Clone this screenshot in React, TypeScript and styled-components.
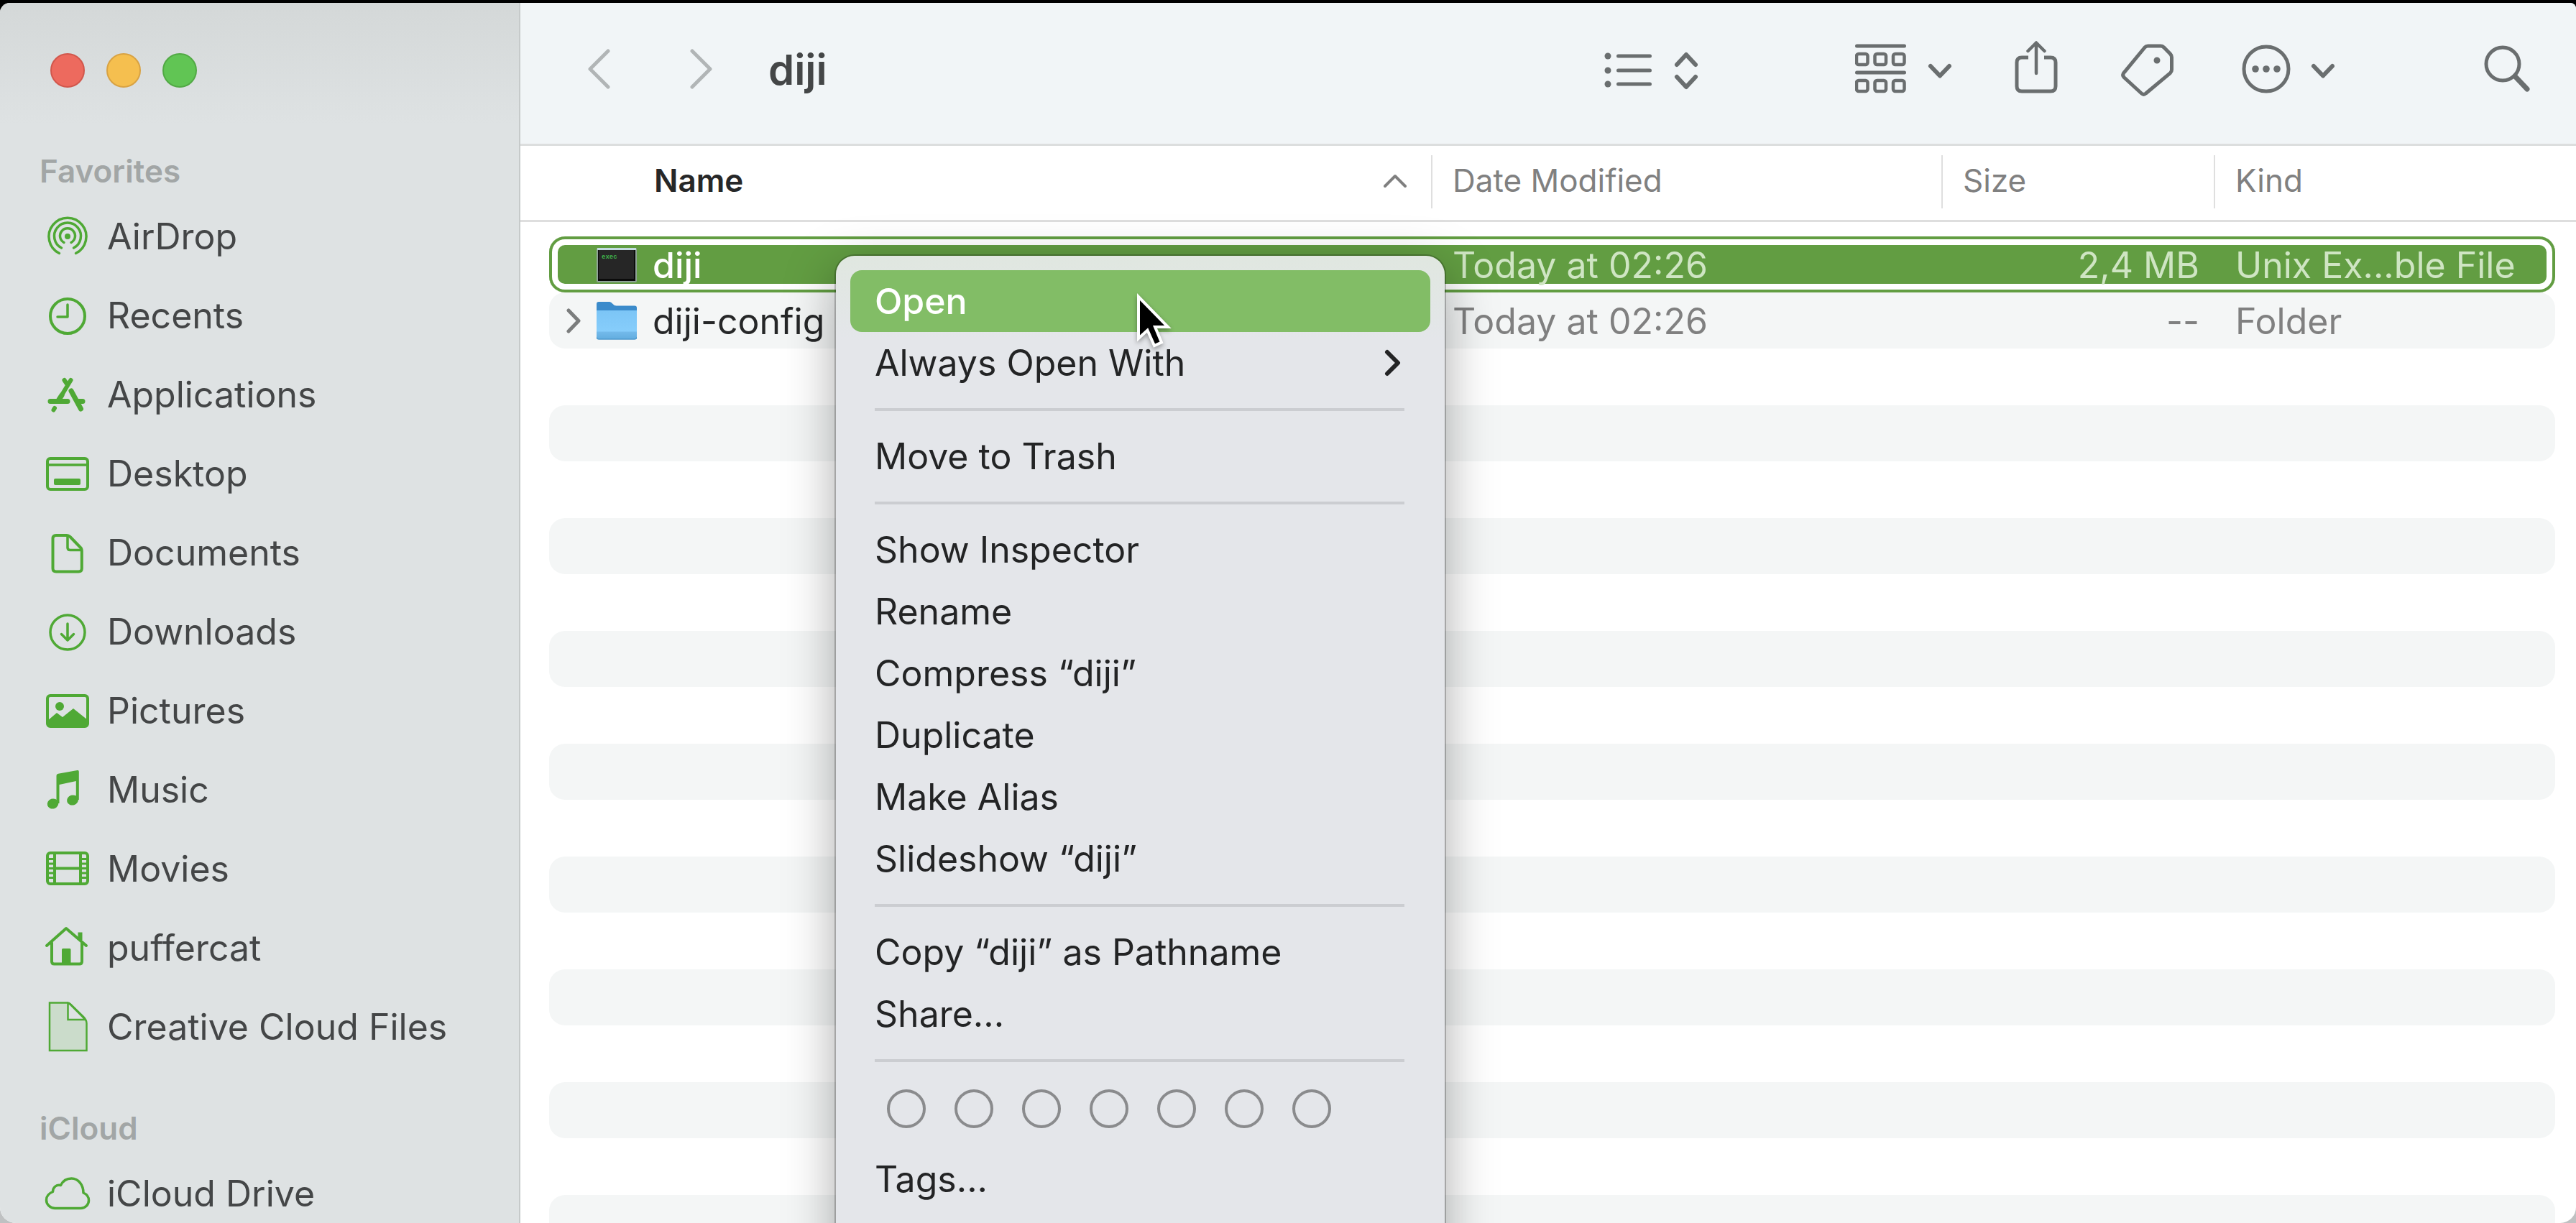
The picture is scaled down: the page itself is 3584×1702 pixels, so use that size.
import React from "react";
import styled, { createGlobalStyle } from "styled-components";

const green = "#4fa935";
const rowGreen = "#629d42";
const glyph = "#6a6e6f";
const listColumns = "minmax(0, 1fr) 710px 379px";

const GlobalStyle = createGlobalStyle`
  *, *::before, *::after { box-sizing: border-box; }
  body {
    margin: 0;
    overflow: hidden;
    background: linear-gradient(#000 50%, #bfc1c2 50%);
    font-family: Inter, "Liberation Sans", sans-serif;
    font-size: 50px;
    line-height: 60px;
    color: #262728;
  }
  button { font: inherit; color: inherit; background: none; border: 0; padding: 0; margin: 0; }
  svg { display: block; flex: none; }
`;

const Screen = styled.div`
  height: 100vh;
  padding-top: 4px;
  overflow: hidden;
`;

const FinderWindow = styled.div`
  position: relative;
  display: flex;
  height: 100%;
  border-radius: 14px 8px 22px 22px;
  overflow: hidden;
  background: #fff;
`;

/* ---------- sidebar ---------- */

const Sidebar = styled.aside`
  flex: none;
  width: 724px;
  padding: 70px 0 0 57px;
  border-right: 2px solid #c6caca;
  background: linear-gradient(#d4d8d8, #dee2e3 170px);
  overflow: hidden;
`;

const TrafficLights = styled.div`
  display: flex;
  gap: 30px;
  padding-left: 13px;
`;

const Light = styled.button<{ $fill: string; $edge: string }>`
  width: 48px;
  height: 48px;
  border-radius: 50%;
  background: ${(p) => p.$fill};
  border: 2px solid ${(p) => p.$edge};
`;

const SectionTitle = styled.h2<{ $gap: number }>`
  margin: ${(p) => p.$gap}px 0 10px -2px;
  font-size: 44px;
  line-height: 52px;
  font-weight: 600;
  color: #a2a6a6;
`;

const PlaceList = styled.ul`
  list-style: none;
  margin: 0;
  padding: 0;
`;

const Place = styled.a`
  display: flex;
  align-items: center;
  gap: 23px;
  height: 110px;
  padding-left: 5px;
  color: #444647;
  text-decoration: none;
  white-space: nowrap;
`;

/* ---------- toolbar ---------- */

const Main = styled.main`
  flex: 1;
  min-width: 0;
  display: flex;
  flex-direction: column;
`;

const Toolbar = styled.header`
  display: flex;
  flex: none;
  align-items: center;
  justify-content: space-between;
  height: 199px;
  padding: 0 64px 10px 93px;
  background: #f1f5f7;
  border-bottom: 3px solid #dcdede;
`;

const ToolGroup = styled.div<{ $gap: number }>`
  display: flex;
  align-items: center;
  gap: ${(p) => p.$gap}px;
`;

const Title = styled.h1`
  margin: 0;
  font-size: 58px;
  line-height: 70px;
  font-weight: 600;
  color: #444647;
`;

/* ---------- file list ---------- */

const FileTable = styled.table`
  display: block;
  flex: none;
`;

const HeadSection = styled.thead`
  display: block;
  padding: 13px 0 16px;
  border-bottom: 3px solid #dedede;
`;

const HeadRow = styled.tr`
  display: grid;
  grid-template-columns: ${listColumns} 504px;
`;

const HeadCell = styled.th<{ $active?: boolean }>`
  display: flex;
  align-items: center;
  justify-content: space-between;
  height: 74px;
  padding: 0 34px 4px ${(p) => (p.$active ? 186 : 28)}px;
  border-left: ${(p) => (p.$active ? 0 : 2)}px solid #dfdfdf;
  font-size: 44px;
  font-weight: ${(p) => (p.$active ? 600 : 400)};
  color: ${(p) => (p.$active ? "#262728" : "#808080")};
`;

const Body = styled.tbody`
  display: block;
  padding: 20px 29px 0 40px;
`;

const FileRow = styled.tr<{ $selected?: boolean; $striped?: boolean }>`
  display: grid;
  grid-template-columns: ${listColumns} 475px;
  height: ${(p) => (p.$selected || p.$striped ? 78 : 79)}px;
  border-radius: 22px;
  background: ${(p) => (p.$selected ? rowGreen : p.$striped ? "#f4f6f6" : "transparent")};
  box-shadow: ${(p) => (p.$selected ? `inset 0 0 0 4px ${rowGreen}, inset 0 0 0 12px #fff` : "none")};
  color: ${(p) => (p.$selected ? "#cfe5c3" : "#808080")};
`;

const NameCell = styled.td<{ $selected?: boolean }>`
  display: grid;
  grid-template-columns: 22px 56px auto;
  justify-content: start;
  align-items: center;
  column-gap: 22px;
  padding: 2px 0 0 22px;
  color: ${(p) => (p.$selected ? "#fff" : "#262728")};
  font-weight: ${(p) => (p.$selected ? 500 : 400)};
`;

const Cell = styled.td<{ $end?: boolean }>`
  display: flex;
  align-items: center;
  justify-content: ${(p) => (p.$end ? "flex-end" : "flex-start")};
  padding: 2px ${(p) => (p.$end ? 20 : 0)}px 0 30px;
  white-space: nowrap;
`;

/* ---------- context menu ---------- */

const Menu = styled.div`
  position: absolute;
  top: 352px;
  left: 1163px;
  width: 847px;
  min-height: 100%;
  padding: 20px;
  border-radius: 26px;
  background: linear-gradient(#e0e7e0, #e4e6ea 120px);
  box-shadow: 0 0 0 2px rgba(0, 0, 0, 0.22), 0 20px 70px rgba(0, 0, 0, 0.34);
`;

const MenuItem = styled.button<{ $active?: boolean }>`
  display: flex;
  align-items: center;
  justify-content: space-between;
  width: 100%;
  height: 86px;
  padding: 0 40px 0 34px;
  border-radius: 16px;
  text-align: left;
  color: ${(p) => (p.$active ? "#fff" : "#232425")};
  background: ${(p) => (p.$active ? "#82bd66" : "transparent")};
  font-weight: ${(p) => (p.$active ? 500 : 400)};
`;

const Separator = styled.hr`
  height: 4px;
  margin: 20px 36px 20px 34px;
  border: 0;
  background: #cbcdd1;
`;

const TagRow = styled.div`
  display: flex;
  gap: 40px;
  padding: 18px 0 28px 51px;
`;

const TagDot = styled.button`
  width: 54px;
  height: 54px;
  border: 4px solid #8a8b8d;
  border-radius: 50%;
`;

const Pointer = styled.svg`
  position: absolute;
  top: 50px;
  left: 416px;
  filter: drop-shadow(0 3px 3px rgba(0, 0, 0, 0.35));
`;

/* ---------- drawings ---------- */

type Drawing = { children: React.ReactNode };

const SideIcon = ({ children }: Drawing) => (
  <svg width="64" height="72" viewBox="0 0 64 72" fill="none" stroke={green} strokeWidth="4" strokeLinecap="round" strokeLinejoin="round" aria-hidden="true">
    {children}
  </svg>
);

const ToolIcon = ({ width, children }: Drawing & { width: number }) => (
  <svg width={width} height="80" viewBox={`0 0 ${width} 80`} fill="none" stroke={glyph} strokeWidth="5" strokeLinecap="round" strokeLinejoin="round" aria-hidden="true">
    {children}
  </svg>
);

const icons: Record<string, React.ReactNode> = {
  airdrop: (
    <g strokeWidth="3.500">
      <circle cx="32" cy="36" r="4" fill={green} stroke="none" />
      <path d="M27 44.500A10.500 10.500 0 1 1 37 44.500" />
      <path d="M23.500 52A18.500 18.500 0 1 1 40.500 52" />
      <path d="M20.500 59.500A26 26 0 1 1 43.500 59.500" />
    </g>
  ),
  recents: (
    <>
      <circle cx="32" cy="37" r="24" />
      <path d="M32 21v17H18" strokeWidth="3.500" />
    </>
  ),
  applications: (
    <g strokeWidth="7">
      <path d="M36.500 16L22 40M27.500 16l4 6" strokeWidth="6" />
      <path d="M8 45.500h24M48 45.500h5" />
      <path d="M37 31l13.500 25" />
      <path d="M14 55l-1.500 2.500" strokeWidth="6" />
      <path d="M20 43l4-6" />
    </g>
  ),
  desktop: (
    <>
      <rect x="4" y="15" width="56" height="43" rx="4" />
      <path d="M4 24h56" strokeWidth="3.500" />
      <rect x="13" y="43" width="37" height="9" rx="2" fill={green} stroke="none" />
    </>
  ),
  documents: (
    <g>
      <path d="M16 12h15c2 0 3 0.600 4.500 2L50 29c1.200 1.200 1.800 2.500 1.800 4.500V58c0 3-1.500 4.500-4.500 4.500H16c-3 0-4.500-1.500-4.500-4.500V16.500c0-3 1.500-4.500 4.500-4.500z" />
      <path d="M32 13v16c0 2.500 1 3.500 3.500 3.500H51" strokeWidth="3.500" />
    </g>
  ),
  downloads: (
    <g strokeWidth="3.500">
      <circle cx="32" cy="37" r="24" />
      <path d="M32 25v23M23.500 39.500L32 48l8.500-8.500" />
    </g>
  ),
  pictures: (
    <>
      <rect x="4" y="15" width="56" height="43" rx="4" />
      <circle cx="21" cy="30" r="6" fill={green} stroke="none" />
      <path d="M4 50l13-11 8 6 15-12 20 16v7c0 1.500-.5 2-2 2H6c-1.500 0-2-.5-2-2z" fill={green} stroke="none" />
    </>
  ),
  music: (
    <g fill={green} stroke="none">
      <ellipse cx="11.500" cy="55.500" rx="7.800" ry="7" transform="rotate(-18 11.500 55.500)" />
      <ellipse cx="39" cy="50.500" rx="8" ry="7" transform="rotate(-18 39 50.500)" />
      <path d="M16.500 17c0-2 .8-2.800 2.500-3.200L45.500 9c1.500-.2 2.300.4 2.300 2v39h-4V24L20.500 29v26h-4z" />
    </g>
  ),
  movies: (
    <g strokeWidth="3">
      <rect x="4" y="14" width="56" height="43" rx="4" strokeWidth="4" />
      <path d="M14 14v43M50 14v43" strokeWidth="4" />
      <path d="M14 35.500h36" strokeWidth="4" />
      <path d="M5 22.500h8M5 29h8M5 35.500h8M5 42h8M5 48.500h8M51 22.500h8M51 29h8M51 35.500h8M51 42h8M51 48.500h8" />
    </g>
  ),
  home: (
    <>
      <path d="M3 33L30 9l28 24" />
      <path d="M10 29v26c0 2.500 1 3.500 3.500 3.500h35c2.500 0 3.500-1 3.500-3.500V29" />
      <path d="M49.500 25V14.500" strokeWidth="6" strokeLinecap="butt" />
      <path d="M24 39c0-1.500.8-2 2-2h8.500c1.200 0 2 .5 2 2v19H24z" fill={green} stroke="none" />
    </>
  ),
  creative: (
    <g strokeWidth="2.500" strokeLinejoin="miter">
      <path d="M7 2.500h25c2 0 3 1 4 2L54 22c3.500 3.500 4.500 6 4.500 9v38H7z" fill="#cbdccb" />
      <path d="M32.500 3v23H56c-1-2-2-3-3.500-4.500L36 5c-1-1-2-1.500-3.500-2z" fill="#dee2e3" />
    </g>
  ),
  cloud: (
    <path d="M14.500 56.500h36c6 0 11-4.800 11-11 0-4.800-2.800-8.500-7.500-10.500C54 24 47 15 37.500 15c-7 0-12 3.200-15 9.500-5.500-1.500-11 2.500-11 9-5 2-9 6-9 11.500 0 6.200 5.200 11.500 12 11.500z" strokeWidth="3.500" />
  ),
};

const TerminalIcon = () => (
  <svg width="56" height="50" viewBox="0 0 56 50" aria-hidden="true">
    <rect x="0" y="1" width="56" height="48" rx="2" fill="#8fa397" />
    <rect x="1" y="1" width="54" height="3" fill="#c3dbe0" />
    <rect x="2" y="4" width="52" height="43" fill="#0b0b0b" />
    <rect x="3" y="4" width="49" height="40" fill="#262626" />
    <text x="7" y="16" fill="#3fae4a" fontFamily="Liberation Mono, monospace" fontWeight="700" fontSize="9">exec</text>
  </svg>
);

const FolderIcon = () => (
  <svg width="56" height="54" viewBox="0 0 56 54" aria-hidden="true">
    <defs>
      <linearGradient id="folder-front" x1="0" y1="0" x2="0" y2="1">
        <stop offset="0" stopColor="#7cc5f6" />
        <stop offset="0.720" stopColor="#86cdfb" />
        <stop offset="0.760" stopColor="#72b9ea" />
        <stop offset="1" stopColor="#62addf" />
      </linearGradient>
    </defs>
    <path d="M0 3c0-2 1-3 3-3h14c2 0 3 .5 4.500 2L24 4.200c1 .8 2 1.200 3.500 1.200H53c2 0 3 1 3 3V20H0z" fill="#3b8bcb" />
    <path d="M0 12h56v37c0 2-1 3-3 3H3c-2 0-3-1-3-3z" fill="url(#folder-front)" />
    <path d="M0 49c0 2 1 3 3 3h50c2 0 3-1 3-3" fill="none" stroke="#4f9ace" strokeWidth="1.500" />
  </svg>
);

/* ---------- data ---------- */

const favorites = [
  ["airdrop", "AirDrop"],
  ["recents", "Recents"],
  ["applications", "Applications"],
  ["desktop", "Desktop"],
  ["documents", "Documents"],
  ["downloads", "Downloads"],
  ["pictures", "Pictures"],
  ["music", "Music"],
  ["movies", "Movies"],
  ["home", "puffercat"],
  ["creative", "Creative Cloud Files"],
];

const menuGroups = [
  ["Open", "Always Open With"],
  ["Move to Trash"],
  ["Show Inspector", "Rename", "Compress “diji”", "Duplicate", "Make Alias", "Slideshow “diji”"],
  ["Copy “diji” as Pathname", "Share..."],
];

const tagNames = ["Red", "Orange", "Yellow", "Green", "Blue", "Purple", "Gray"];
const emptyRows = Array.from({ length: 16 }, (_, i) => i);

const Places = ({ items }: { items: string[][] }) => (
  <PlaceList>
    {items.map(([icon, label]) => (
      <li key={label}>
        <Place href="#">
          <SideIcon>{icons[icon]}</SideIcon>
          {label}
        </Place>
      </li>
    ))}
  </PlaceList>
);

export default function App() {
  return (
    <Screen>
      <GlobalStyle />
      <FinderWindow>
        <Sidebar>
          <TrafficLights>
            <Light $fill="#ed6a5e" $edge="#d1574c" aria-label="Close" />
            <Light $fill="#f5bf4f" $edge="#d8a243" aria-label="Minimize" />
            <Light $fill="#61c554" $edge="#52a945" aria-label="Zoom" />
          </TrafficLights>
          <SectionTitle $gap={90}>Favorites</SectionTitle>
          <Places items={favorites} />
          <SectionTitle $gap={60}>iCloud</SectionTitle>
          <Places items={[["cloud", "iCloud Drive"]]} />
        </Sidebar>

        <Main>
          <Toolbar>
            <ToolGroup $gap={78}>
              <ToolGroup $gap={110}>
                <button aria-label="Back">
                  <ToolIcon width={32}><path d="M29 14L4 39l25 25" stroke="#b1b5b6" /></ToolIcon>
                </button>
                <button aria-label="Forward">
                  <ToolIcon width={32}><path d="M4 14l25 25L4 64" stroke="#b1b5b6" /></ToolIcon>
                </button>
              </ToolGroup>
              <Title>diji</Title>
            </ToolGroup>
            <ToolGroup $gap={208}>
              <button aria-label="View as list">
                <ToolIcon width={141}>
                  <g fill={glyph} stroke="none">
                    <circle cx="5" cy="21" r="4.500" />
                    <circle cx="5" cy="41" r="4.500" />
                    <circle cx="5" cy="60" r="4.500" />
                  </g>
                  <path d="M19.500 21h44M19.500 41h44M19.500 60h44" />
                  <path d="M101 33l13-14 13 14M101 50l13 14 13-14" strokeWidth="6" />
                </ToolIcon>
              </button>
              <ToolGroup $gap={88}>
                <button aria-label="Group items">
                  <ToolIcon width={134}>
                    <path d="M2.500 7h66M2.500 44h66" />
                    {[18, 55].map((y) =>
                      [2, 27.5, 53].map((x) => <rect key={`${x}-${y}`} x={x} y={y} width="15.500" height="15" rx="3" strokeWidth="4.500" />)
                    )}
                    <path d="M105 35l13 13.500L131 35" strokeWidth="6" />
                  </ToolIcon>
                </button>
                <button aria-label="Share">
                  <ToolIcon width={60}>
                    <path d="M19 23h-9c-4.500 0-7 2.500-7 7v33c0 4.500 2.500 7 7 7h40c4.500 0 7-2.500 7-7V30c0-4.500-2.500-7-7-7h-9" strokeLinecap="butt" />
                    <path d="M30 45V4M18.500 14L30 2.500 41.500 14" strokeWidth="4.500" />
                  </ToolIcon>
                </button>
                <button aria-label="Edit tags">
                  <ToolIcon width={80}>
                    <path d="M37.500 7H55c2 0 3 .4 4.500 1.800L68.500 18c1.500 1.500 2 2.700 2 4.800V40c0 2-.6 3.200-2 4.600L34.500 73c-2 1.800-4 1.800-6 0L4.500 51c-2.400-2.400-2.400-5 0-7.400L33 9c1.400-1.500 2.500-2 4.500-2z" strokeWidth="5" />
                    <circle cx="50" cy="27" r="4.500" fill={glyph} stroke="none" />
                  </ToolIcon>
                </button>
                <button aria-label="More actions">
                  <ToolIcon width={129}>
                    <circle cx="34" cy="39" r="31" />
                    <g fill={glyph} stroke="none">
                      <circle cx="19" cy="39" r="4.800" />
                      <circle cx="34" cy="39" r="4.800" />
                      <circle cx="49" cy="39" r="4.800" />
                    </g>
                    <path d="M100 35l13 13.500L126 35" strokeWidth="6" />
                  </ToolIcon>
                </button>
              </ToolGroup>
              <button aria-label="Search">
                <ToolIcon width={64}>
                  <circle cx="26" cy="32" r="23" />
                  <path d="M43 49l17 18" strokeWidth="7" />
                </ToolIcon>
              </button>
            </ToolGroup>
          </Toolbar>

          <FileTable>
            <HeadSection>
              <HeadRow>
                <HeadCell $active scope="col">
                  Name
                  <svg width="32" height="20" viewBox="0 0 32 20" fill="none" stroke="#808080" strokeWidth="4" strokeLinecap="round" strokeLinejoin="round" aria-hidden="true">
                    <path d="M2 18L16 4l14 14" />
                  </svg>
                </HeadCell>
                <HeadCell scope="col">Date Modified</HeadCell>
                <HeadCell scope="col">Size</HeadCell>
                <HeadCell scope="col">Kind</HeadCell>
              </HeadRow>
            </HeadSection>
            <Body>
              <FileRow $selected>
                <NameCell $selected>
                  <span />
                  <TerminalIcon />
                  diji
                </NameCell>
                <Cell>Today at 02:26</Cell>
                <Cell $end>2,4 MB</Cell>
                <Cell>Unix Ex...ble File</Cell>
              </FileRow>
              <FileRow $striped>
                <NameCell>
                  <svg width="22" height="36" viewBox="0 0 22 36" fill="none" stroke="#7b7d7d" strokeWidth="5" strokeLinecap="round" strokeLinejoin="round" aria-hidden="true">
                    <path d="M5 3l14 14.500L5 32" />
                  </svg>
                  <FolderIcon />
                  diji-config
                </NameCell>
                <Cell>Today at 02:26</Cell>
                <Cell $end>--</Cell>
                <Cell>Folder</Cell>
              </FileRow>
              {emptyRows.map((i) => (
                <FileRow key={i} $striped={i % 2 === 1} />
              ))}
            </Body>
          </FileTable>
        </Main>

        <Menu role="menu">
          {menuGroups.map((group) => (
            <React.Fragment key={group[0]}>
              {group.map((label) => (
                <MenuItem key={label} role="menuitem" $active={label === "Open"}>
                  {label}
                  {label === "Always Open With" && (
                    <svg width="24" height="40" viewBox="0 0 24 40" fill="none" stroke="#232425" strokeWidth="6" strokeLinecap="round" strokeLinejoin="round" aria-hidden="true">
                      <path d="M4 5l15 15L4 35" />
                    </svg>
                  )}
                </MenuItem>
              ))}
              <Separator />
            </React.Fragment>
          ))}
          <TagRow>
            {tagNames.map((name) => (
              <TagDot key={name} aria-label={name} />
            ))}
          </TagRow>
          <MenuItem role="menuitem">Tags...</MenuItem>
          <Pointer width="52" height="80" viewBox="0 0 52 80" aria-hidden="true">
            <path d="M5 7v58l12.500-11.500L27 75l10-4.500L28 49h18z" fill="#000" stroke="#fff" strokeWidth="4" />
          </Pointer>
        </Menu>
      </FinderWindow>
    </Screen>
  );
}
